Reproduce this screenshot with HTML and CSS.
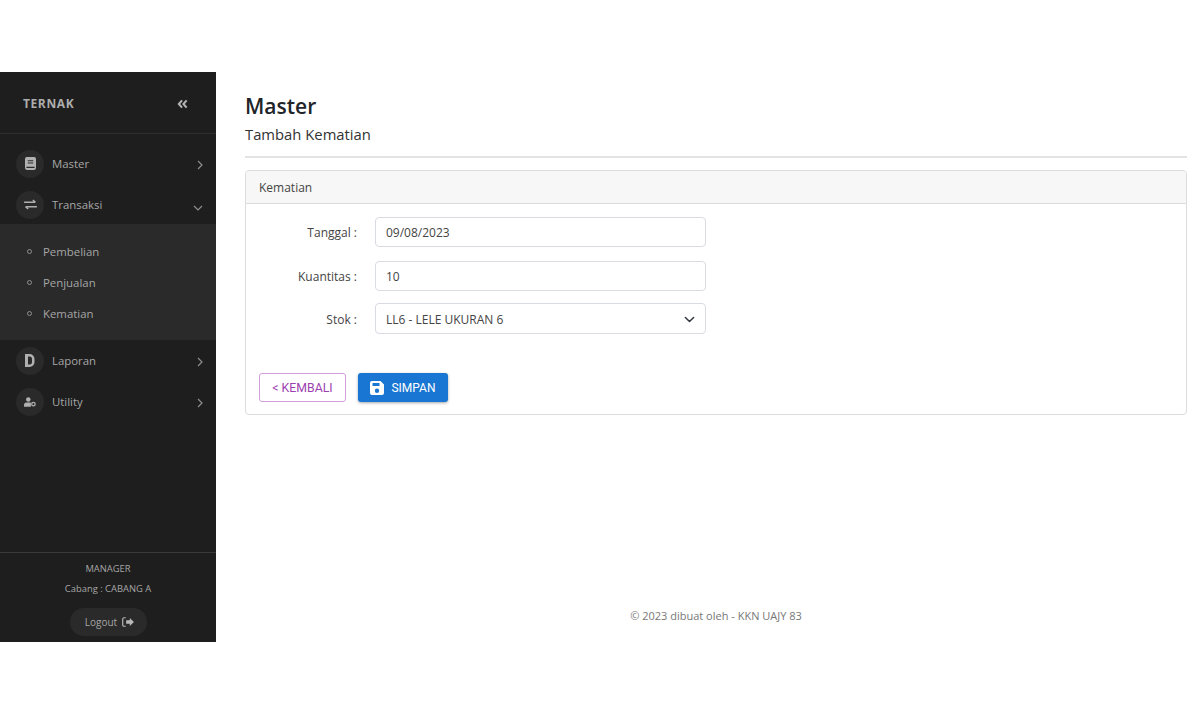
FILE: index.html
```html
<!DOCTYPE html>
<html lang="id">
<head>
<meta charset="utf-8">
<title>Tambah Kematian</title>
<link rel="stylesheet" href="styles.css">
</head>
<body>
<div class="app">
  <aside class="sidebar">
    <div class="brand">
      <span class="brand-name">TERNAK</span>
      <svg class="collapse" viewBox="0 0 12 10" width="11" height="10"><path d="M5.500 1 2 5l3.500 4M10.500 1 7 5l3.500 4" fill="none" stroke="#b4b4b4" stroke-width="2.200"/></svg>
    </div>
    <nav class="menu">
      <a class="item">
        <span class="circle"><svg viewBox="0 0 12 14" width="11" height="13"><path fill="#b0b0b0" fill-rule="evenodd" d="M2 0h8a2 2 0 0 1 2 2v10a2 2 0 0 1-2 2H2a2 2 0 0 1-2-2V2a2 2 0 0 1 2-2zM3 3.500v1h6v-1zM3 6v1h6V6zM1.500 10.500v1.500h9v-1.500z"/></svg></span>
        <span class="label">Master</span>
        <svg class="chev" viewBox="0 0 8 10" width="8" height="10"><path d="M2 1l4 4-4 4" fill="none" stroke="#8e8e8e" stroke-width="1.200"/></svg>
      </a>
      <a class="item">
        <span class="circle"><svg viewBox="0 0 14 12" width="13" height="11"><path fill="none" stroke="#b0b0b0" stroke-width="1.500" d="M0 3.500h12M9.500 1l3 2.500M14 8.500H2M4.500 11l-3-2.500"/></svg></span>
        <span class="label">Transaksi</span>
        <svg class="chev down" viewBox="0 0 10 8" width="10" height="8"><path d="M1 2l4 4 4-4" fill="none" stroke="#8e8e8e" stroke-width="1.200"/></svg>
      </a>
      <div class="sub">
        <a class="sub-item"><span class="dot"></span>Pembelian</a>
        <a class="sub-item"><span class="dot"></span>Penjualan</a>
        <a class="sub-item"><span class="dot"></span>Kematian</a>
      </div>
      <a class="item">
        <span class="circle"><svg viewBox="0 0 10 13" width="10" height="13"><path fill="#b0b0b0" fill-rule="evenodd" d="M0 0h4.500A5 5 0 0 1 9.500 5v3a5 5 0 0 1-5 5H0zM3 2.500v8h1.500A2.500 2.500 0 0 0 7 8V5a2.500 2.500 0 0 0-2.500-2.500z"/></svg></span>
        <span class="label">Laporan</span>
        <svg class="chev" viewBox="0 0 8 10" width="8" height="10"><path d="M2 1l4 4-4 4" fill="none" stroke="#8e8e8e" stroke-width="1.200"/></svg>
      </a>
      <a class="item">
        <span class="circle"><svg viewBox="0 0 14 11" width="12" height="10"><circle cx="5" cy="2.600" r="2.600" fill="#b0b0b0"/><path fill="#b0b0b0" d="M0 11V9a3 3 0 0 1 3-3h4a3 3 0 0 1 1 .2V11z"/><circle cx="11" cy="8" r="2" fill="none" stroke="#b0b0b0" stroke-width="1.500"/></svg></span>
        <span class="label">Utility</span>
        <svg class="chev" viewBox="0 0 8 10" width="8" height="10"><path d="M2 1l4 4-4 4" fill="none" stroke="#8e8e8e" stroke-width="1.200"/></svg>
      </a>
    </nav>
    <div class="side-foot">
      <div class="role">MANAGER</div>
      <div class="branch">Cabang : CABANG A</div>
      <a class="logout">Logout
        <svg viewBox="0 0 13 11" width="12" height="10"><path fill="#b8b8b8" d="M13 5.500 8.500 1v2.500H4.500v4h4V10z"/><path fill="none" stroke="#b8b8b8" stroke-width="1.300" d="M4 .8H2.200A1.500 1.500 0 0 0 .7 2.300v6.400a1.500 1.500 0 0 0 1.500 1.500H4"/></svg>
      </a>
    </div>
  </aside>
  <main class="main">
    <h1 class="title">Master</h1>
    <h2 class="subtitle">Tambah Kematian</h2>
    <hr class="rule">
    <section class="card">
      <header class="card-head">Kematian</header>
      <form class="card-body">
        <div class="row"><label class="field-label">Tanggal :</label><div class="control">09/08/2023</div></div>
        <div class="row"><label class="field-label">Kuantitas :</label><div class="control">10</div></div>
        <div class="row row-select"><label class="field-label">Stok :</label><div class="control control-select">LL6 - LELE UKURAN 6
          <svg viewBox="0 0 16 16" width="11" height="11"><path d="M2 5l6 6 6-6" fill="none" stroke="#343a40" stroke-width="2.200" stroke-linecap="round" stroke-linejoin="round"/></svg></div></div>
        <div class="actions">
          <button type="button" class="btn btn-back">&lt; KEMBALI</button>
          <button type="button" class="btn btn-save">
            <svg viewBox="0 0 14 14" width="14" height="14"><path fill="#fff" fill-rule="evenodd" d="M2 0h8.500L14 3.500V12a2 2 0 0 1-2 2H2a2 2 0 0 1-2-2V2a2 2 0 0 1 2-2zM2.500 2v3h7V2zM7 7.500a2.200 2.200 0 1 0 0 4.400 2.200 2.200 0 0 0 0-4.400z"/></svg>
            SIMPAN
          </button>
        </div>
      </form>
    </section>
    <footer class="page-foot">© 2023 dibuat oleh - KKN UAJY 83</footer>
  </main>
</div>
</body>
</html>
```
FILE: styles.css
```css
* { box-sizing: border-box; }
html, body { margin: 0; background: #fff; }
body { padding-top: 72px; font-family: "Open Sans", "Noto Sans", sans-serif; color: #212529; }
.app { display: flex; height: 570px; }
.sidebar { width: 216px; flex: none; background: #1e1e1e; display: flex; flex-direction: column; color: #a6a6a6; }
.brand { height: 62px; flex: none; border-bottom: 1px solid #2f2f2f; display: flex; align-items: center; justify-content: space-between; padding: 0 28px 0 23px; }
.brand-name { font-size: 12px; font-weight: 700; letter-spacing: .6px; color: #adadad; margin-top: 1px; }
.collapse { margin-top: 3px; }
.menu { flex: 1; padding-top: 9px; }
.item { display: flex; align-items: center; height: 41px; padding: 0 12px 0 16px; font-size: 11.4px; }
.circle { width: 28px; height: 28px; border-radius: 50%; background: #2a2a2a; display: flex; align-items: center; justify-content: center; flex: none; }
.label { margin-left: 8px; flex: 1; }
.chev { margin-top: 2px; }
.down { margin-top: 6px; margin-right: 1px; }
.sub { background: #2a2a2a; height: 116px; padding-top: 12px; margin-top: -1px; }
.sub-item { display: flex; align-items: center; height: 31px; padding-left: 27px; font-size: 11.4px; }
.dot { width: 5px; height: 5px; border-radius: 50%; border: 1px solid #8e8e8e; margin-right: 11px; }
.side-foot { height: 90px; flex: none; border-top: 1px solid #3a3a3a; display: flex; flex-direction: column; align-items: center; font-size: 9.4px; color: #a6a6a6; padding-top: 8px; }
.role { height: 15px; line-height: 15px; }
.branch { height: 15px; line-height: 15px; margin-top: 5px; }
.logout { margin-top: 12px; width: 77px; height: 28px; border-radius: 14px; background: #2a2a2a; display: flex; align-items: center; justify-content: center; gap: 5px; font-size: 10px; padding-left: 3px; }
.main { flex: 1; padding: 20px 13px 0 29px; display: flex; flex-direction: column; min-width: 0; }
.title { margin: 0; font-size: 21px; font-weight: 600; line-height: 28px; }
.subtitle { margin: 0; font-size: 14.8px; font-weight: 400; line-height: 28px; color: #333; }
.rule { border: 0; height: 2px; background: #e3e3e3; margin: 8px 0 12px; width: 100%; }
.card { border: 1px solid #dcdcdc; border-radius: 4px; height: 245px; }
.card-head { height: 33px; background: #f7f7f7; border-bottom: 1px solid #dcdcdc; padding-left: 13px; line-height: 33px; font-size: 12px; color: #444; border-radius: 4px 4px 0 0; }
.card-body { padding: 13px 13px 0; font-size: 12px; }
.row { display: flex; align-items: center; height: 30px; margin-bottom: 14px; }
.row-select { height: 31px; margin-top: -2px; }
.row-select .field-label { padding-top: 1px; }
.field-label { width: 98px; text-align: right; color: #444; flex: none; }
.control { margin-left: 18px; width: 331px; height: 100%; border: 1px solid #d8dbe3; border-radius: 4px; padding: 0 10px; display: flex; align-items: center; color: #444; }
.control-select { justify-content: space-between; padding-top: 1px; }
.actions { display: flex; gap: 12px; margin-top: 39px; }
.btn { height: 29px; border-radius: 3px; font-family: Roboto, sans-serif; font-size: 12.3px; display: flex; align-items: center; justify-content: center; padding: 0; }
.btn-back { width: 87px; background: #fff; border: 1px solid #d09fdc; color: #9c3fb0; }
.btn-save { width: 90px; background: #1976d2; border: 0; color: #fff; gap: 7px; font-size: 12px; font-weight: 400; box-shadow: 0 1px 3px rgba(0,0,0,.35); }
.page-foot { text-align: center; font-size: 11px; color: #777; margin-top: 193px; line-height: 16px; }
```
